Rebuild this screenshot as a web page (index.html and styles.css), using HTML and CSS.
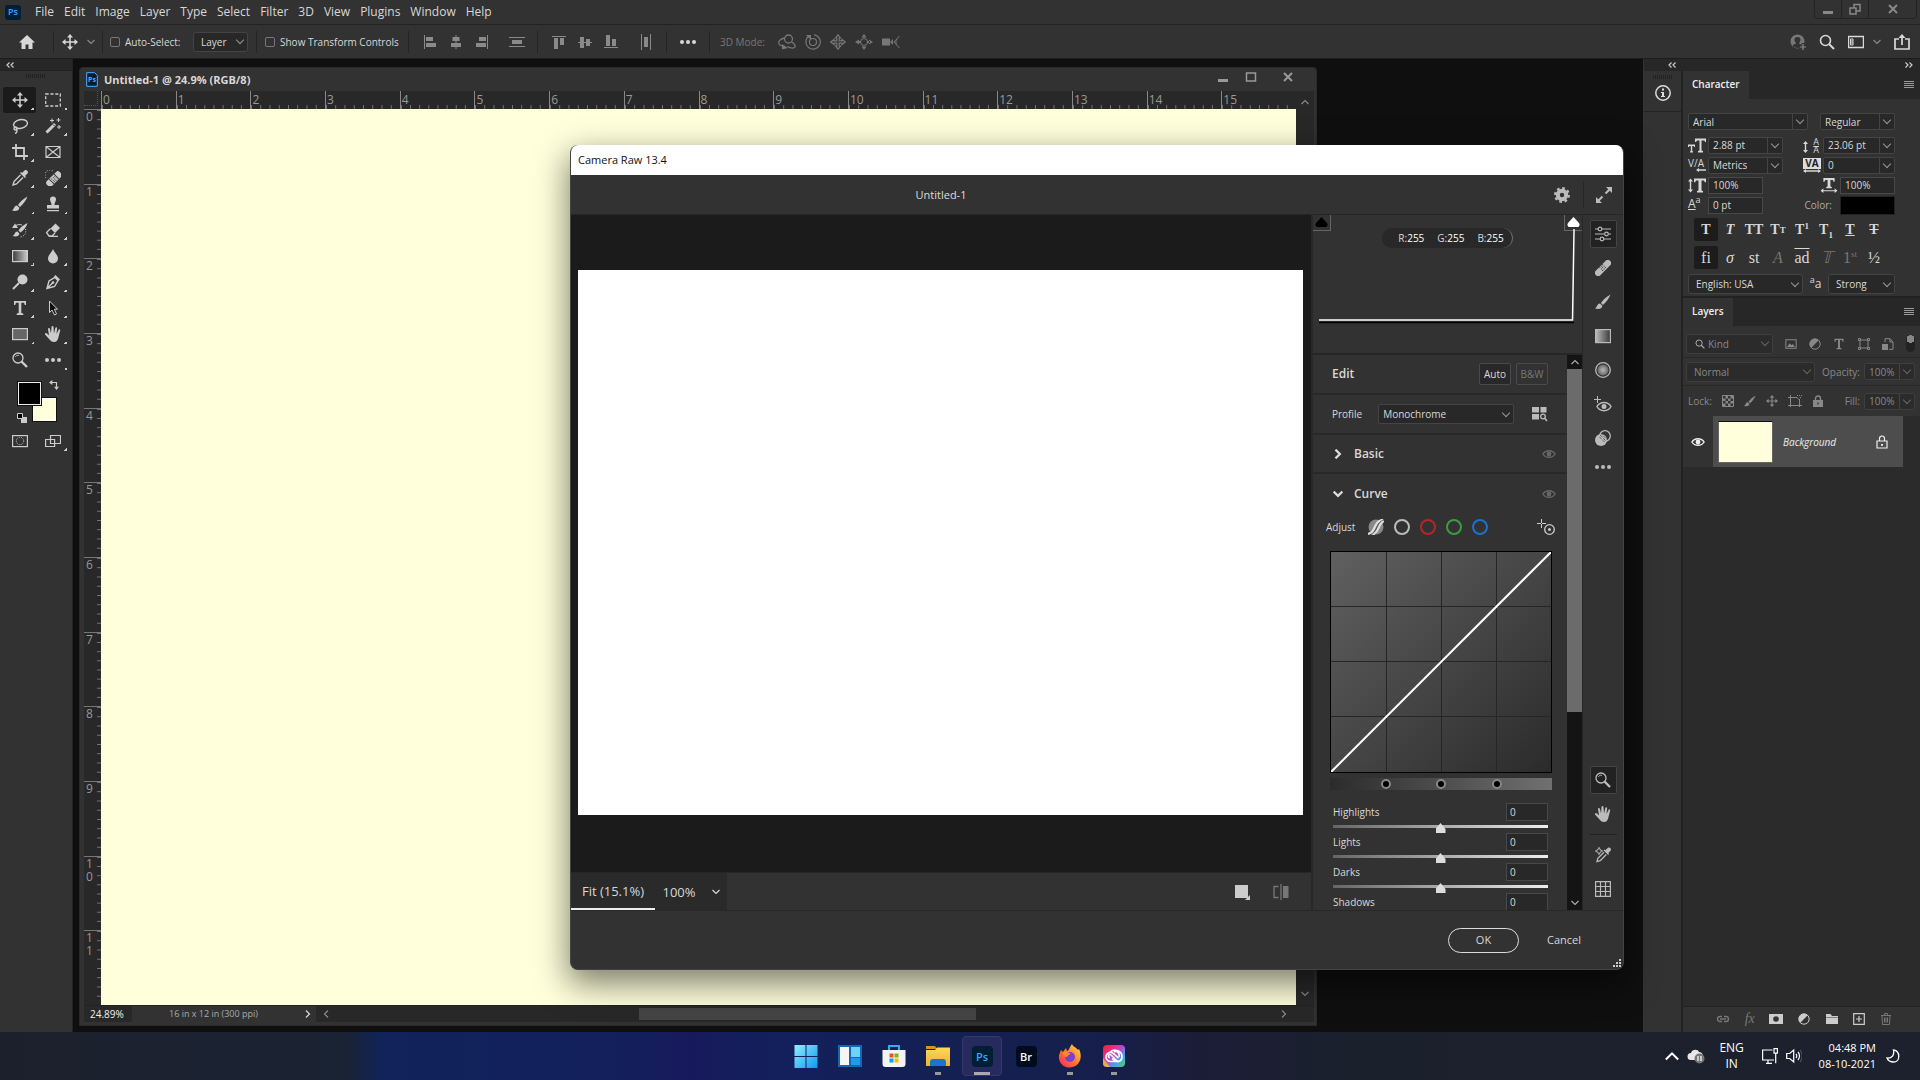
FILE: index.html
```html
<!DOCTYPE html>
<html lang="en">
<head>
<meta charset="utf-8">
<title>Untitled-1 @ 24.9% (RGB/8)</title>
<link rel="stylesheet" href="styles.css">
</head>
<body>
<svg class="defs" aria-hidden="true">
  <defs>
    <linearGradient id="gr"><stop offset="0" stop-color="#3a3a3a"/><stop offset="1" stop-color="#ccc"/></linearGradient>
    <linearGradient id="grl"><stop offset="0" stop-color="#bbb"/><stop offset="1" stop-color="#3a3a3a"/></linearGradient>
    <radialGradient id="rad"><stop offset="0.2" stop-color="#aaa"/><stop offset="1" stop-color="#666"/></radialGradient>
    <linearGradient id="win" x1="0" y1="0" x2="1" y2="1"><stop offset="0" stop-color="#8ef0ff"/><stop offset="1" stop-color="#0f97ee"/></linearGradient>
    <linearGradient id="fold" x1="0" y1="0" x2="0" y2="1"><stop offset="0" stop-color="#ffd75e"/><stop offset="1" stop-color="#efb22d"/></linearGradient>
    <linearGradient id="fire" x1="1" y1="0" x2="0" y2="1"><stop offset="0" stop-color="#ffe14a"/><stop offset="0.5" stop-color="#ff7a2e"/><stop offset="1" stop-color="#f5206a"/></linearGradient>
    <linearGradient id="cc" x1="0" y1="0" x2="1" y2="1"><stop offset="0" stop-color="#e8262b"/><stop offset="0.3" stop-color="#ee2a86"/><stop offset="0.5" stop-color="#b34fd0"/><stop offset="0.75" stop-color="#3fa9f0"/><stop offset="1" stop-color="#5fd04a"/></linearGradient>
  </defs>
  <symbol id="home" viewBox="0 0 16 16"><path fill="currentColor" d="M8 1 0 8.500h2.500V15h4v-4.500h3V15h4V8.500H16z"/></symbol>
  <symbol id="move" viewBox="0 0 16 16"><path fill="none" stroke="currentColor" stroke-width="1.500" d="M8 2v12M2 8h12"/><path fill="currentColor" d="M8 0l3 3.500H5zM8 16l3-3.500H5zM0 8l3.500-3v6zM16 8l-3.500-3v6z"/></symbol>
  <symbol id="chev" viewBox="0 0 8 8"><path fill="none" stroke="currentColor" stroke-width="1.200" d="M.5 2 4 5.500 7.500 2"/></symbol>
  <symbol id="chevb" viewBox="0 0 8 8"><path fill="none" stroke="currentColor" stroke-width="1.800" d="M.5 2 4 5.500 7.500 2"/></symbol>
  <symbol id="al1" viewBox="0 0 16 16"><path fill="currentColor" d="M2 1h1v14H2zM4 3h7v4H4zM4 9h10v4H4z"/></symbol>
  <symbol id="al2" viewBox="0 0 16 16"><path fill="currentColor" d="M7.500 1h1v14h-1zM4.500 3h7v4h-7zM3 9h10v4H3z"/></symbol>
  <symbol id="al3" viewBox="0 0 16 16"><path fill="currentColor" d="M13 1h1v14h-1zM5 3h7v4H5zM2 9h10v4H2z"/></symbol>
  <symbol id="al4" viewBox="0 0 16 16"><path fill="currentColor" d="M0 3h16v1H0zM0 12h16v1H0zM3 6h10v4H3z"/></symbol>
  <symbol id="al5" viewBox="0 0 16 16"><path fill="currentColor" d="M1 2h14v1H1zM3 4h4v11H3zM9 4h4v7H9z"/></symbol>
  <symbol id="al6" viewBox="0 0 16 16"><path fill="currentColor" d="M1 8h14v1H1zM3 3h4v11H3zM9 5h4v7H9z"/></symbol>
  <symbol id="al7" viewBox="0 0 16 16"><path fill="currentColor" d="M1 13h14v1H1zM3 1h4v11H3zM9 5h4v7H9z"/></symbol>
  <symbol id="al8" viewBox="0 0 16 16"><path fill="currentColor" d="M3 0h1v16H3zM12 0h1v16h-1zM6 3h4v10H6z"/></symbol>
  <symbol id="dots" viewBox="0 0 16 16"><g fill="currentColor"><circle cx="2" cy="8" r="2"/><circle cx="8" cy="8" r="2"/><circle cx="14" cy="8" r="2"/></g></symbol>
  <symbol id="m1" viewBox="0 0 18 16"><g fill="none" stroke="currentColor" stroke-width="1.300"><circle cx="10.500" cy="5" r="4"/><path d="M6.500 4C2 5 0 7.500 1 10c.5 1 2 2 4 2M13.500 8c3 1.500 4.500 4 3 5.500-1.500 1-5 .5-7-1"/></g><path fill="currentColor" d="M4 10l6 4-6 1.500z"/></symbol>
  <symbol id="m2" viewBox="0 0 16 16"><g fill="none" stroke="currentColor" stroke-width="1.200"><circle cx="8" cy="8" r="3.500"/><path d="M4 2a7.200 7.200 0 1 0 5-1.200"/></g><path fill="currentColor" d="M1 1h5v5z"/></symbol>
  <symbol id="m3" viewBox="0 0 16 16"><path fill="none" stroke="currentColor" stroke-width="1.200" d="M8 .8 10.500 4H9.200v2.800H12V5.500L15.200 8 12 10.500V9.200H9.200V12h1.300L8 15.200 5.500 12h1.300V9.200H4v1.300L.8 8 4 5.500v1.300h2.800V4H5.500z"/></symbol>
  <symbol id="m4" viewBox="0 0 18 16"><circle cx="9" cy="8" r="3.500" fill="none" stroke="currentColor"/><path fill="currentColor" d="M9 0l2.500 3.500H6.500zM9 16l2.500-3.500H6.500zM0 8l4-2.500v5zM18 8l-4-2.500v5zM3 7h3v2H3zM12 7h3v2h-3z"/></symbol>
  <symbol id="m5" viewBox="0 0 18 16"><path fill="currentColor" d="M0 4.500h8v7H0zM8 8l3-3v6z"/><path fill="none" stroke="currentColor" d="M17.500 2 12 8l5.500 6M15 5c-1.500 2-1.500 4 0 6"/></symbol>
  <symbol id="marq" viewBox="0 0 16 16"><rect x=".7" y="2" width="14.600" height="12" fill="none" stroke="currentColor" stroke-width="1.300" stroke-dasharray="3 1.800"/></symbol>
  <symbol id="lasso" viewBox="0 0 16 16"><g fill="none" stroke="currentColor" stroke-width="1.400"><ellipse cx="8.500" cy="6" rx="7" ry="4.300" transform="rotate(-12 8.500 6)"/><circle cx="3.500" cy="10.500" r="1.500"/><path d="M4.500 11.500c1 1.500.5 3-1.500 4"/></g></symbol>
  <symbol id="wand" viewBox="0 0 16 16"><path stroke="currentColor" stroke-width="3" d="M1.500 14.500 10 6"/><path stroke="#333" d="M8 6.500 9.500 8"/><path stroke="currentColor" d="M7 .5v4M5 2.500h4M13.500 0v4M11.500 2h4M14 7v4M12 9h4"/></symbol>
  <symbol id="crop" viewBox="0 0 16 16"><path fill="none" stroke="currentColor" stroke-width="1.800" d="M4 0v12h12M0 4h12v12"/></symbol>
  <symbol id="frame" viewBox="0 0 16 16"><path fill="none" stroke="currentColor" stroke-width="1.200" d="M1 2.500h14v11H1zM1 2.500l14 11M15 2.500l-14 11"/></symbol>
  <symbol id="drop" viewBox="0 0 16 16"><path fill="none" stroke="currentColor" stroke-width="1.400" d="M8.500 5 2 11.500 1 15l3.500-1L11 7.500"/><path fill="currentColor" d="M8 3l5 5 1-1-1-1 2.500-2.500C17 1.500 14.500-1 12.500.5L10 3 9 2z"/></symbol>
  <symbol id="heal" viewBox="0 0 16 16"><g transform="rotate(-45 9 9)"><rect x="0" y="5.500" width="18" height="7" rx="2.500" fill="currentColor"/><path stroke="#333" d="M5.500 5.500v7M12.500 5.500v7"/><path stroke="#333" stroke-dasharray="1 1" d="M7 7.500h4.500M7 9.500h4.500M7 11.300h4.500"/></g><path fill="none" stroke="currentColor" stroke-dasharray="1 1.500" d="M1 8a5 5 0 0 1 7-7"/></symbol>
  <symbol id="brush" viewBox="0 0 16 16"><path fill="currentColor" d="M15.500.5C11 3 8 6 6 9l2 2c3-3 6-6 7.500-10.500zM5 9.500c-3 0-2.500 3.500-5 5 3 1 7.500.5 7.300-2.800z"/></symbol>
  <symbol id="stamp" viewBox="0 0 16 16"><path fill="currentColor" d="M5 3.500a3 3 0 1 1 6 0C11 5.500 9.500 6 9.500 9H14v3.500H2V9h4.500C6.500 6 5 5.500 5 3.500zM2 14h12v1.300H2z"/></symbol>
  <symbol id="hist" viewBox="0 0 16 16"><path fill="currentColor" d="M15.500 1C11 3 8 6 6.500 8.500l2 2C12 8 14.500 5 15.500 1zM5.500 9.500c-3 0-2.500 3.500-5 4.500 3 1 7 .5 6.800-2.500zM0 6h6L3 1.500z"/><path fill="none" stroke="currentColor" d="M3 4c3-2 5-1.500 7-1"/><path fill="none" stroke="currentColor" stroke-dasharray="1 1.400" d="M13.500 7c1 3 0 7-5 8"/></symbol>
  <symbol id="erase" viewBox="0 0 16 16"><path fill="currentColor" d="M10.500 1.500 15 6l-5 5-4.500-4.500z"/><path fill="none" stroke="currentColor" stroke-width="1.300" d="M5.500 6.500 1.500 10.500 4 14h3l3-3M4 14.300h9"/></symbol>
  <symbol id="grad" viewBox="0 0 16 16"><rect x=".6" y="2.600" width="14.800" height="11" fill="url(#gr)" stroke="currentColor" stroke-width="1.200"/></symbol>
  <symbol id="gradl" viewBox="0 0 16 16"><rect x=".6" y="1.600" width="14.800" height="13" fill="url(#grl)" stroke="currentColor" stroke-width="1.200"/></symbol>
  <symbol id="blur" viewBox="0 0 16 16"><path fill="currentColor" d="M8 1c1 3 5 6 5 9.500a5 5 0 0 1-10 0C3 7 7 4 8 1z"/></symbol>
  <symbol id="dodge" viewBox="0 0 16 16"><circle cx="10.500" cy="5.500" r="5" fill="currentColor"/><path stroke="currentColor" stroke-width="2" d="M7 9 1 15"/></symbol>
  <symbol id="pen" viewBox="0 0 16 16"><path fill="none" stroke="currentColor" stroke-width="1.400" d="M2 14.500 4 7l6-3.500 3 3L9.500 12.500zM2 14.500 8 8.500"/><path fill="currentColor" d="M10.500 1 15 5.500 13.500 7 9 2.500z"/><circle cx="8" cy="8.500" r="1.300" fill="currentColor"/></symbol>
  <symbol id="type" viewBox="0 0 16 16"><path fill="currentColor" d="M2 1h12v4h-1.200L12 2.800H9.300V13l2 .6V15H4.700v-1.400l2-.6V2.800H4L3.200 5H2z"/></symbol>
  <symbol id="arrow" viewBox="0 0 16 16"><path fill="#0d0d0d" stroke="currentColor" d="M4.500 1v11.500L7 10l2.500 5 2-1L9.300 9.200h3.200z"/></symbol>
  <symbol id="rect" viewBox="0 0 16 16"><rect x=".6" y="2.600" width="14.800" height="11" fill="#666" stroke="currentColor" stroke-width="1.200"/></symbol>
  <symbol id="hand" viewBox="0 0 16 16"><path fill="currentColor" d="M5 14 0 8.500c-.5-1.500 1-2 2-1l2 2L3 3c0-1.500 1.700-1.500 2 0l1 4.500L6.500 1c.2-1.300 1.900-1.300 2 0L9 7.500 10.300 2c.4-1.300 2-1 1.800.4L11.500 8l2-4c.6-1.200 2-.7 1.700.6L13.500 11c-.5 3-2 5-4.500 5-2 0-3-.7-4-2z"/></symbol>
  <symbol id="zoom" viewBox="0 0 16 16"><circle cx="6" cy="6" r="5" fill="none" stroke="currentColor" stroke-width="1.300"/><path stroke="currentColor" stroke-width="2.400" d="M9.500 9.500 15 15"/><path fill="none" stroke="currentColor" stroke-width=".8" d="M3.300 5A3 3 0 0 1 7 3.300"/></symbol>
  <symbol id="swap" viewBox="0 0 12 12"><path fill="none" stroke="currentColor" stroke-width="1.400" d="M3 3h6v6"/><path fill="currentColor" d="M0 3l4-3v6zM9 12 6 8h6z"/></symbol>
  <symbol id="def" viewBox="0 0 10 10"><path fill="#ccc" d="M4 4h6v6H4z"/><path fill="#000" stroke="#ccc" d="M.5.500h5v5h-5z"/></symbol>
  <symbol id="mask" viewBox="0 0 16 16"><rect x=".6" y="2.600" width="14.800" height="11" fill="none" stroke="currentColor" stroke-width="1.200"/><circle cx="8" cy="8" r="3.700" fill="none" stroke="currentColor" stroke-dasharray="1 1"/></symbol>
  <symbol id="screen" viewBox="0 0 16 16"><path fill="#333" stroke="currentColor" stroke-width="1.200" d="M.6 6.500h9v7h-9zM5.500 2.500h10v8h-10z"/></symbol>
  <symbol id="info" viewBox="0 0 16 16"><circle cx="8" cy="8" r="7.200" fill="none" stroke="currentColor" stroke-width="1.500"/><path fill="currentColor" d="M7 3.500h2v2H7zM6 7h3v4h1v1H6v-1h1V8H6z"/></symbol>
  <symbol id="user" viewBox="0 0 16 16"><circle cx="7.500" cy="7.500" r="7" fill="#777"/><path fill="#333" d="M7.500 3c4.500 0 3 5 1.500 6 0 1.500 3 1 3.500 3-2 2.500-8 2.500-10 0 .5-2 3.500-1.500 3.500-3-1.500-1-3-6 1.500-6z"/><path stroke="#333" stroke-width="3" d="M13 9v7M9.500 13H16"/><path stroke="#888" stroke-width="1.200" d="M13 10v6M10 13h6"/></symbol>
  <symbol id="srch" viewBox="0 0 16 16"><circle cx="6.500" cy="6.500" r="5" fill="none" stroke="currentColor" stroke-width="1.600"/><path stroke="currentColor" stroke-width="2" d="M10 10l5 5"/></symbol>
  <symbol id="wksp" viewBox="0 0 16 16"><path fill="none" stroke="currentColor" stroke-width="1.300" d="M.6 2.500h14.800v11H.6z"/><path fill="none" stroke="currentColor" d="M2.500 5h2.500v6H2.500zM2.500 7h2.500M2.500 9h2.500"/></symbol>
  <symbol id="share" viewBox="0 0 16 16"><path fill="none" stroke="currentColor" stroke-width="1.700" d="M5 5H1v10h14V5h-4M8 11V2"/><path fill="currentColor" d="M8 0l3.500 4h-7z"/></symbol>
  <symbol id="wmin" viewBox="0 0 12 12"><path fill="currentColor" d="M1 8h10v3H1z"/></symbol>
  <symbol id="wres" viewBox="0 0 12 12"><path fill="none" stroke="currentColor" stroke-width="1.500" d="M1 5h6v6H1zM5 5V1.500h6V8H7"/></symbol>
  <symbol id="wmax" viewBox="0 0 12 12"><path fill="none" stroke="currentColor" stroke-width="1.500" d="M1.500 2h9v8h-9z"/></symbol>
  <symbol id="wx" viewBox="0 0 12 12"><path fill="none" stroke="currentColor" stroke-width="2" d="M2 2l8 8M10 2 2 10"/></symbol>
  <symbol id="doc" viewBox="0 0 12 15"><path fill="#001e36" stroke="#4ab1ff" d="M.7.700h8L11.300 3.500v10.800H.7z"/></symbol>
  <symbol id="dbl" viewBox="0 0 8 6"><path fill="none" stroke="currentColor" stroke-width="1.200" d="M3.500.500 1 3l2.500 2.500M7.500.500 5 3l2.500 2.500"/></symbol>
  <symbol id="gear" viewBox="0 0 16 16"><circle cx="8" cy="8" r="4.200" fill="none" stroke="currentColor" stroke-width="4"/><circle cx="8" cy="8" r="6.800" fill="none" stroke="currentColor" stroke-width="2.400" stroke-dasharray="2.670 2.670"/></symbol>
  <symbol id="expand" viewBox="0 0 16 16"><path stroke="currentColor" stroke-width="2" d="M14 2 9.500 6.500M2 14l4.500-4.500"/><path fill="currentColor" d="M10 0h6v6zM0 10v6h6z"/></symbol>
  <symbol id="slid" viewBox="0 0 16 16"><g fill="none" stroke="currentColor" stroke-width="1.200"><path d="M0 3h3M7 3h9M0 8h9.500M13.500 8H16M0 13h5M9 13h7"/><circle cx="5" cy="3" r="1.800"/><circle cx="11.500" cy="8" r="1.800"/><circle cx="7" cy="13" r="1.800"/></g></symbol>
  <symbol id="spot" viewBox="0 0 16 16"><g transform="rotate(-45 8 8)"><rect x="-2" y="4.800" width="20" height="6.400" rx="3" fill="currentColor"/><path stroke="#333" stroke-dasharray="1 1" d="M6 5v6M8 5v6M10 5v6"/></g></symbol>
  <symbol id="radial" viewBox="0 0 16 16"><circle cx="8" cy="8" r="7.300" fill="none" stroke="currentColor" stroke-width="1.300"/><circle cx="8" cy="8" r="5.500" fill="url(#rad)"/></symbol>
  <symbol id="redeye" viewBox="0 0 18 16"><path stroke="currentColor" d="M3.500 0v7M0 3.500h7"/><path fill="none" stroke="currentColor" stroke-width="1.500" d="M3 10.500c3-5.500 11-5.500 14 0-3 5.500-11 5.500-14 0z"/><circle cx="10" cy="10.500" r="2.500" fill="currentColor"/></symbol>
  <symbol id="preset" viewBox="0 0 16 16"><circle cx="6" cy="10" r="6" fill="currentColor"/><circle cx="10" cy="6" r="5.300" fill="none" stroke="currentColor" stroke-width="1.300"/><path stroke="#333" stroke-dasharray="1 1" d="M5 5l6 6M7 4.500l5 5M4.500 7l5 5"/></symbol>
  <symbol id="wb" viewBox="0 0 16 16"><use href="#drop" x="1" y="0" width="15" height="16"/><circle cx="4" cy="4" r="2.200" fill="none" stroke="currentColor"/><path stroke="currentColor" d="M4 0v2M4 6v2M0 4h2M6 4h2"/></symbol>
  <symbol id="grid" viewBox="0 0 16 16"><path fill="none" stroke="currentColor" stroke-width="1.200" d="M.6.600h14.800v14.800H.6zM.6 5.500h14.800M.6 10.500h14.800M5.500.600v14.800M10.500.600v14.800"/></symbol>
  <symbol id="eye" viewBox="0 0 16 16"><path fill="none" stroke="currentColor" stroke-width="1.600" d="M1 8c3-5 11-5 14 0-3 5-11 5-14 0z"/><circle cx="8" cy="8" r="2.800" fill="currentColor"/></symbol>
  <symbol id="browse" viewBox="0 0 16 16"><path fill="currentColor" d="M0 1h7v5.500H0zM8.500 1h6v5.500h-6zM0 8h7v5.500H0z"/><circle cx="11" cy="10.500" r="2.300" fill="none" stroke="currentColor" stroke-width="1.300"/><path stroke="currentColor" stroke-width="1.500" d="M12.500 12l2.500 3"/></symbol>
  <symbol id="param" viewBox="0 0 16 16"><circle cx="8" cy="8" r="7.500" fill="#888"/><path fill="none" stroke="#ddd" stroke-width="2.200" d="M0 15c4-1 5-3 7-7.500S11 1 15 .8M3.500 16c4-1 5.500-3 7-7s2-5 5.500-7.500"/><path fill="none" stroke="#444" stroke-width=".8" d="M2 16c4-1.500 5-3.500 7-8s3.500-6 7-7"/></symbol>
  <symbol id="ring" viewBox="0 0 16 16"><circle cx="8" cy="8" r="7" fill="none" stroke="currentColor" stroke-width="2"/></symbol>
  <symbol id="target" viewBox="0 0 18 16"><path stroke="currentColor" stroke-dasharray="4 1" d="M4.500 0v9M0 4.500h9"/><circle cx="12.500" cy="10.500" r="4.800" fill="none" stroke="currentColor" stroke-width="1.300"/><circle cx="12.500" cy="10.500" r="1.500" fill="currentColor"/></symbol>
  <symbol id="clip" viewBox="0 0 14 12"><path fill="currentColor" d="M7 0l6 6.500c1.500 2.500 0 4.500-2 4.500H3C1 11-.5 9 1 6.500z"/></symbol>
  <symbol id="sq" viewBox="0 0 16 16"><path fill="#ccc" d="M1 1h13v13H1z"/><path fill="#ccc" d="M16 11v5h-5z"/></symbol>
  <symbol id="ba" viewBox="0 0 16 16"><path fill="none" stroke="currentColor" stroke-width="1.300" d="M8 0v16M5.500 2.500H1v11h4.500"/><path fill="currentColor" d="M10 2h5.500v12H10z"/></symbol>
  <symbol id="pic" viewBox="0 0 14 12"><path fill="none" stroke="currentColor" stroke-width="1.200" d="M1 1h12v10H1z"/><path fill="currentColor" d="M2.500 9.500 5.500 5l2 2.500L9 6l2.500 3.500z"/></symbol>
  <symbol id="adj" viewBox="0 0 12 12"><circle cx="6" cy="6" r="5.200" fill="none" stroke="currentColor"/><path fill="currentColor" d="M9.700 2.300A5.200 5.200 0 0 0 2.300 9.700z"/></symbol>
  <symbol id="shape" viewBox="0 0 12 12"><path fill="none" stroke="currentColor" d="M2 2h8v8H2z"/><path fill="#333" stroke="currentColor" d="M.5.500h2v2h-2zM9.500.500h2v2h-2zM.5 9.500h2v2h-2zM9.500 9.500h2v2h-2z"/></symbol>
  <symbol id="smart" viewBox="0 0 12 12"><path fill="none" stroke="currentColor" d="M3 4V.700h5L11 4v7.300H7M8 .700V4h3"/><path fill="currentColor" d="M0 6h6v6H0z"/></symbol>
  <symbol id="checker" viewBox="0 0 12 12"><path fill="none" stroke="currentColor" d="M.5.500h11v11H.5z"/><path fill="currentColor" d="M3.500 1h2.500v2.500H3.500zM8.500 1H11v2.500H8.500zM1 3.500h2.500V6H1zM6 3.500h2.500V6H6zM3.500 6H6v2.500H3.500zM8.500 6H11v2.500H8.500zM1 8.500h2.500V11H1zM6 8.500h2.500V11H6z"/></symbol>
  <symbol id="artb" viewBox="0 0 14 12"><path fill="none" stroke="currentColor" d="M2.500 0v12M0 2.500h9M0 10.500h14M11.500 4v8M9 2.500l2.500 2.500"/><path stroke="currentColor" stroke-dasharray="1 1" d="M9 .500h5M12 2.500h2"/></symbol>
  <symbol id="lock" viewBox="0 0 12 12"><path fill="none" stroke="currentColor" stroke-width="1.400" d="M3.500 5V3.500a2.500 2.500 0 0 1 5 0V5"/><path fill="currentColor" d="M1 5h10v7H1z"/><path fill="#333" d="M5.300 7.500h1.400v2H5.300z"/></symbol>
  <symbol id="locko" viewBox="0 0 12 14"><path fill="none" stroke="currentColor" stroke-width="1.200" d="M3.500 6V3.500a2.500 2.500 0 0 1 5 0V6M1 6h10v7H1z"/><path fill="currentColor" d="M5 9h2v1.800H5z"/></symbol>
  <symbol id="link" viewBox="0 0 14 12"><path fill="none" stroke="currentColor" stroke-width="1.400" d="M6 8.500H4a2.500 2.500 0 0 1 0-5h2M8 8.500h2a2.500 2.500 0 0 0 0-5H8M4 6h6"/></symbol>
  <symbol id="lmask" viewBox="0 0 14 12"><path fill="currentColor" d="M0 1h14v10H0z"/><circle cx="7" cy="6" r="2.800" fill="#333"/></symbol>
  <symbol id="folder" viewBox="0 0 14 12"><path fill="currentColor" d="M1 1h4.500L7 3h6v1H1zM1 4.500h12V11H1z"/></symbol>
  <symbol id="plus" viewBox="0 0 12 12"><path fill="none" stroke="currentColor" stroke-width="1.200" d="M.7.700h10.600v10.600H.7zM6 3v6M3 6h6"/></symbol>
  <symbol id="trash" viewBox="0 0 12 12"><path fill="none" stroke="currentColor" d="M1 2.500h10M4.500 2.500v-2h3v2M2 2.500l.5 9h7l.5-9M4.500 4.500v5M6 4.500v5M7.500 4.500v5"/></symbol>
  <symbol id="size" viewBox="0 0 18 14"><path fill="currentColor" d="M7 0h11v3.500h-1L16.500 2h-3v10l1.500.5V14h-5v-1.500l1.500-.5V2H9L8 3.500H7zM0 6h7v2.500H6L5.700 7.500H4.200v5L5 13v1H2v-1l.8-.5v-5H1.300L1 8.500H0z"/></symbol>
  <symbol id="vs" viewBox="0 0 18 14"><path fill="currentColor" d="M6 0h12v3.800h-1.200L16 2h-2.500v10l1.500.5V14H9v-1.500l1.500-.5V2H8L7.200 3.800H6zM2.500 0 5 3H3.200v8H5l-2.500 3L0 11h1.800V3H0z"/></symbol>
  <symbol id="hs" viewBox="0 0 18 16"><path fill="currentColor" d="M3 0h12v4h-1.200L13 2h-2.500v7l1.500.5V11H6V9.500L7.500 9V2H5L4.200 4H3zM0 13.500 3 11v2h12v-2l3 2.500-3 2.500v-2H3v2z"/></symbol>
  <symbol id="harr" viewBox="0 0 18 4"><path fill="currentColor" d="M0 2l3-2v1.300h12V0l3 2-3 2V2.700H3V4z"/></symbol>
  <symbol id="larr" viewBox="0 0 10 4"><path fill="currentColor" d="M0 2l3-2v1.300h7v1.400H3V4z"/></symbol>
  <symbol id="varr" viewBox="0 0 5 12"><path fill="currentColor" d="M2.500 0 5 3H3.200v6H5l-2.500 3L0 9h1.800V3H0z"/></symbol>
  <symbol id="cloud" viewBox="0 0 18 16"><path fill="#e8e8e8" d="M4 12a3.500 3.500 0 0 1 0-7C5 1 11 1 12 4c4 0 5 5 3 8z"/><circle cx="12.500" cy="10.500" r="5" fill="#777"/><path stroke="#fff" stroke-width="1.200" d="M11 8v5M14 8v5"/></symbol>
  <symbol id="mon" viewBox="0 0 16 16"><path fill="none" stroke="currentColor" stroke-width="1.200" d="M10.500 2H.600v10H12M4 15.300h6M6 12v3M12 .700h3.400v4.500H12zM13.700 5.200v10"/></symbol>
  <symbol id="spk" viewBox="0 0 16 16"><path fill="none" stroke="currentColor" stroke-width="1.200" d="M.7 5.500h3l4-3.500v12l-4-3.500h-3zM10 6c1 1 1 3 0 4M12 4c2 2 2 6 0 8"/><path fill="none" stroke="#666" d="M14 2c3 3 3 9 0 12"/></symbol>
  <symbol id="moon" viewBox="0 0 14 14"><path fill="none" stroke="currentColor" stroke-width="1.300" d="M7.500 1c7 1 7 12 0 12-3 0-5.500-1.500-6.500-4 5 .5 7.500-3 6.500-8z"/></symbol>
</svg>

<header>
  <nav class="menubar" aria-label="Main menu">
    <span class="pslogo">Ps</span>
    <button>File</button><button>Edit</button><button>Image</button><button>Layer</button><button>Type</button><button>Select</button><button>Filter</button><button>3D</button><button>View</button><button>Plugins</button><button>Window</button><button>Help</button>
    <div class="winbtns"><button aria-label="Minimize"><svg class="i12"><use href="#wmin"/></svg></button><button aria-label="Restore"><svg class="i12"><use href="#wres"/></svg></button><button class="wclose" aria-label="Close"><svg class="i12"><use href="#wx"/></svg></button></div>
  </nav>
  <div class="options">
    <div class="grp g-home"><button aria-label="Home"><svg class="i16"><use href="#home"/></svg></button></div>
    <div class="grp g-move"><svg class="i16"><use href="#move"/></svg><svg class="i8 dim"><use href="#chev"/></svg></div>
    <div class="grp g-auto"><label><input type="checkbox">Auto-Select:</label><span class="sel rnd"><select aria-label="Auto-select target"><option>Layer</option></select></span></div>
    <div class="grp g-show"><label><input type="checkbox">Show Transform Controls</label></div>
    <div class="grp g-al dim"><svg class="i16"><use href="#al1"/></svg><svg class="i16"><use href="#al2"/></svg><svg class="i16"><use href="#al3"/></svg><svg class="i16"><use href="#al4"/></svg></div>
    <div class="grp g-al dim"><svg class="i16"><use href="#al5"/></svg><svg class="i16"><use href="#al6"/></svg><svg class="i16"><use href="#al7"/></svg><svg class="i16"><use href="#al8"/></svg></div>
    <div class="grp g-dots"><button aria-label="More"><svg class="i16"><use href="#dots"/></svg></button></div>
    <div class="g-3d dim"><span>3D Mode:</span><svg class="i18"><use href="#m1"/></svg><svg class="i16"><use href="#m2"/></svg><svg class="i16"><use href="#m3"/></svg><svg class="i18"><use href="#m4"/></svg><svg class="i18"><use href="#m5"/></svg></div>
    <div class="g-right"><button aria-label="Account"><svg class="i16"><use href="#user"/></svg></button><button aria-label="Search"><svg class="i16"><use href="#srch"/></svg></button><button class="wk" aria-label="Workspace"><svg class="i16"><use href="#wksp"/></svg><svg class="i8 dim"><use href="#chev"/></svg></button><button aria-label="Share"><svg class="i16"><use href="#share"/></svg></button></div>
  </div>
</header>

<main class="workspace">
  <aside class="tools">
    <div class="collapse"><svg class="idbl"><use href="#dbl"/></svg></div>
    <div class="grip"></div>
    <div class="toolgrid">
      <button class="on fly" aria-label="Move"><svg class="i16"><use href="#move"/></svg></button><button class="fly" aria-label="Marquee"><svg class="i16"><use href="#marq"/></svg></button>
      <button class="fly" aria-label="Lasso"><svg class="i16"><use href="#lasso"/></svg></button><button class="fly" aria-label="Magic wand"><svg class="i16"><use href="#wand"/></svg></button>
      <button class="fly" aria-label="Crop"><svg class="i16"><use href="#crop"/></svg></button><button aria-label="Frame"><svg class="i16"><use href="#frame"/></svg></button>
      <button class="fly" aria-label="Eyedropper"><svg class="i16"><use href="#drop"/></svg></button><button class="fly" aria-label="Healing brush"><svg class="i16"><use href="#heal"/></svg></button>
      <button class="fly" aria-label="Brush"><svg class="i16"><use href="#brush"/></svg></button><button class="fly" aria-label="Clone stamp"><svg class="i16"><use href="#stamp"/></svg></button>
      <button class="fly" aria-label="History brush"><svg class="i16"><use href="#hist"/></svg></button><button class="fly" aria-label="Eraser"><svg class="i16"><use href="#erase"/></svg></button>
      <button class="fly" aria-label="Gradient"><svg class="i16"><use href="#grad"/></svg></button><button class="fly" aria-label="Blur"><svg class="i16"><use href="#blur"/></svg></button>
      <button class="fly" aria-label="Dodge"><svg class="i16"><use href="#dodge"/></svg></button><button class="fly" aria-label="Pen"><svg class="i16"><use href="#pen"/></svg></button>
      <button class="fly" aria-label="Type"><svg class="i16"><use href="#type"/></svg></button><button class="fly" aria-label="Path selection"><svg class="i16"><use href="#arrow"/></svg></button>
      <button class="fly" aria-label="Rectangle"><svg class="i16"><use href="#rect"/></svg></button><button class="fly" aria-label="Hand"><svg class="i16"><use href="#hand"/></svg></button>
      <button aria-label="Zoom"><svg class="i16"><use href="#zoom"/></svg></button><button class="fly" aria-label="Edit toolbar"><svg class="i16"><use href="#dots"/></svg></button>
    </div>
    <div class="swatches"><span class="bg"></span><span class="fg"></span><svg class="i10 swap"><use href="#swap"/></svg><svg class="i10 def"><use href="#def"/></svg></div>
    <div class="toolgrid"><button aria-label="Quick mask"><svg class="i16"><use href="#mask"/></svg></button><button class="fly" aria-label="Screen mode"><svg class="i16"><use href="#screen"/></svg></button></div>
  </aside>

  <section class="stage">
    <article class="docwin">
      <div class="doctitle"><span class="docicon"><svg><use href="#doc"/></svg><b>Ps</b></span><h2>Untitled-1 @ 24.9% (RGB/8)</h2><div class="docbtns"><svg class="i12"><use href="#wmin"/></svg><svg class="i12"><use href="#wmax"/></svg><svg class="i12"><use href="#wx"/></svg></div></div>
      <div class="docbody">
        <div class="corner"></div>
        <div class="hruler"><span>0</span><span>1</span><span>2</span><span>3</span><span>4</span><span>5</span><span>6</span><span>7</span><span>8</span><span>9</span><span>10</span><span>11</span><span>12</span><span>13</span><span>14</span><span>15</span></div>
        <div class="vscroll"><svg class="i8 up"><use href="#chev"/></svg><svg class="i8"><use href="#chev"/></svg></div>
        <div class="vruler"><span>0</span><span>1</span><span>2</span><span>3</span><span>4</span><span>5</span><span>6</span><span>7</span><span>8</span><span>9</span><span>1<br>0</span><span>1<br>1</span></div>
        <div class="canvas"></div>
      </div>
      <div class="status"><span class="zoomv">24.89%</span><span class="dims">16 in x 12 in (300 ppi)</span><svg class="i8 rt"><use href="#chev"/></svg><div class="hscroll"><svg class="i8 lf"><use href="#chev"/></svg><div class="htrack"><div class="hthumb"></div></div><svg class="i8 rt"><use href="#chev"/></svg></div></div>
    </article>

    <section class="dialog" role="dialog" aria-label="Camera Raw 13.4">
      <div class="dtitle">Camera Raw 13.4</div>
      <div class="dhead"><h3>Untitled-1</h3><button class="dgear" aria-label="Settings"><svg class="i16"><use href="#gear"/></svg></button><button class="dexp" aria-label="Full screen"><svg class="i16"><use href="#expand"/></svg></button></div>
      <div class="dmain">
        <div class="preview">
          <div class="pview"><div class="photo"></div></div>
          <div class="pfoot"><button class="fit">Fit (15.1%)</button><button class="pct">100%<svg class="i8"><use href="#chev"/></svg></button><div class="pright"><svg class="i16"><use href="#sq"/></svg><svg class="i16 dk"><use href="#ba"/></svg></div></div>
        </div>
        <div class="edit">
          <div class="histo">
            <div class="clips"><span class="cl blk"><svg><use href="#clip"/></svg></span><span class="rgb"><span>R:<b>255</b></span><span>G:<b>255</b></span><span>B:<b>255</b></span></span><span class="cl"><svg><use href="#clip"/></svg></span></div>
            <svg class="hline" viewBox="0 0 270 90" preserveAspectRatio="none"><path stroke="#000" stroke-width="1.500" fill="none" d="M6 90.500h256"/><path stroke="#fff" stroke-width="1.500" fill="none" d="M6 88h254.500l1.500-90"/></svg>
          </div>
          <div class="scrollwrap">
            <div class="rows">
              <div class="row redit"><h4>Edit</h4><button>Auto</button><button class="off">B&amp;W</button></div>
              <div class="row rprof"><label for="prof">Profile</label><span class="sel"><select id="prof"><option>Monochrome</option></select></span><svg class="i16 lt"><use href="#browse"/></svg></div>
              <div class="row rsec"><svg class="i10 rt"><use href="#chevb"/></svg><h4>Basic</h4><svg class="i14 dk"><use href="#eye"/></svg></div>
              <div class="rsec"><svg class="i10"><use href="#chevb"/></svg><h4>Curve</h4><svg class="i14 dk"><use href="#eye"/></svg></div>
              <div class="adjust"><span>Adjust</span><svg class="i16"><use href="#param"/></svg><svg class="i16 c-w"><use href="#ring"/></svg><svg class="i16 c-r"><use href="#ring"/></svg><svg class="i16 c-g"><use href="#ring"/></svg><svg class="i16 c-b"><use href="#ring"/></svg><svg class="i18 tg"><use href="#target"/></svg></div>
              <div class="curve"><svg viewBox="0 0 220 220" preserveAspectRatio="none"><path stroke="#262626" d="M55.500 0v220M110.500 0v220M165.500 0v220M0 54.500h220M0 109.500h220M0 164.500h220"/><path stroke="#fff" stroke-width="2" d="M0 220 220 0"/></svg></div>
              <div class="splits"><i></i><i></i><i></i></div>
              <div class="slider"><label for="s1">Highlights</label><input class="num" value="0" aria-label="Highlights value"><input type="range" id="s1"></div>
              <div class="slider"><label for="s2">Lights</label><input class="num" value="0" aria-label="Lights value"><input type="range" id="s2"></div>
              <div class="slider"><label for="s3">Darks</label><input class="num" value="0" aria-label="Darks value"><input type="range" id="s3"></div>
              <div class="slider"><label for="s4">Shadows</label><input class="num" value="0" aria-label="Shadows value"><input type="range" id="s4"></div>
            </div>
            <div class="sbar"><svg class="i8 up"><use href="#chev"/></svg><div class="strack"><div class="sthumb"></div></div><svg class="i8"><use href="#chev"/></svg></div>
          </div>
        </div>
        <div class="strip">
          <button class="on" aria-label="Edit"><svg class="i16"><use href="#slid"/></svg></button><button aria-label="Spot removal"><svg class="i16"><use href="#spot"/></svg></button><button aria-label="Adjustment brush"><svg class="i16"><use href="#brush"/></svg></button><button aria-label="Graduated filter"><svg class="i16"><use href="#gradl"/></svg></button><button aria-label="Radial filter"><svg class="i16"><use href="#radial"/></svg></button><button aria-label="Red eye"><svg class="i18"><use href="#redeye"/></svg></button><button aria-label="Presets"><svg class="i16"><use href="#preset"/></svg></button><button class="short" aria-label="More"><svg class="i16"><use href="#dots"/></svg></button>
          <div class="stripend"><button class="on" aria-label="Zoom"><svg class="i16"><use href="#zoom"/></svg></button><button aria-label="Hand"><svg class="i16"><use href="#hand"/></svg></button><hr><button aria-label="Sampler"><svg class="i16"><use href="#wb"/></svg></button><button aria-label="Grid"><svg class="i16"><use href="#grid"/></svg></button></div>
        </div>
      </div>
      <div class="dfoot"><button class="ok">OK</button><button class="cancel">Cancel</button><svg class="rsz" viewBox="0 0 8 8"><path fill="#ccc" d="M6 0h2v2H6zM3 3h2v2H3zM6 3h2v2H6zM0 6h2v2H0zM3 6h2v2H3zM6 6h2v2H6z"/></svg></div>
    </section>
  </section>

  <aside class="dock">
    <div class="dockhead"><svg class="idbl"><use href="#dbl"/></svg><svg class="idbl flip"><use href="#dbl"/></svg></div>
    <div class="dockbody">
      <div class="iconcol"><div class="icell"><div class="grip"></div><svg class="i18"><use href="#info"/></svg></div></div>
      <div class="panels">
        <section class="panel">
          <div class="tabbar"><h3>Character</h3><span class="burger"></span></div>
          <div class="char">
            <div class="cr"><span class="sel btn w120"><select aria-label="Font"><option>Arial</option></select></span><span class="sel btn w75 push"><select aria-label="Font style"><option>Regular</option></select></span></div>
            <div class="cr tight"><svg class="ic"><use href="#size"/></svg><span class="sel btn w75"><select aria-label="Size"><option>2.88 pt</option></select></span><span class="ic lead push"><svg><use href="#varr"/></svg><span><u>A</u><br>A</span></span><span class="sel btn w72"><select aria-label="Leading"><option>23.06 pt</option></select></span></div>
            <div class="cr tight"><span class="ic kern">V/A<svg><use href="#larr"/></svg></span><span class="sel btn w75"><select aria-label="Kerning"><option>Metrics</option></select></span><span class="ic track push"><b>VA</b><svg><use href="#harr"/></svg></span><span class="sel btn w72"><select aria-label="Tracking"><option>0</option></select></span></div>
            <div class="cr tight"><svg class="ic"><use href="#vs"/></svg><input class="fld" value="100%" aria-label="Vertical scale"><svg class="ic push"><use href="#hs"/></svg><input class="fld" value="100%" aria-label="Horizontal scale"></div>
            <div class="cr tight"><span class="ic base"><u>A</u><sup>a</sup></span><input class="fld" value="0 pt" aria-label="Baseline shift"><span class="push clab">Color:</span><span class="color"></span></div>
            <div class="tb"><button class="on"><b>T</b></button><button><i>T</i></button><button>TT</button><button>T<small>T</small></button><button>T<sup>1</sup></button><button>T<sub>1</sub></button><button><u>T</u></button><button><s>T</s></button></div>
            <div class="tb lig"><button class="on">fi</button><button><i>&#963;</i></button><button>st</button><button class="off"><i>A</i></button><button class="over">ad</button><button class="off"><i>&#120139;</i></button><button class="off">1<sup>st</sup></button><button>½</button></div>
            <div class="cr lang"><span class="sel rnd w115"><select aria-label="Language"><option>English: USA</option></select></span><span class="aa"><sup>a</sup>a</span><span class="sel rnd w67"><select aria-label="Anti-aliasing"><option>Strong</option></select></span></div>
          </div>
        </section>
        <section class="panel layers">
          <div class="tabbar"><h3>Layers</h3><span class="burger"></span></div>
          <div class="lr l1"><span class="sel rnd w87 kind"><svg class="i10"><use href="#srch"/></svg><select aria-label="Filter kind"><option>Kind</option></select></span><svg class="i12"><use href="#pic"/></svg><svg class="i12"><use href="#adj"/></svg><svg class="i12"><use href="#type"/></svg><svg class="i12"><use href="#shape"/></svg><svg class="i12"><use href="#smart"/></svg><span class="toggle"></span></div>
          <div class="lr"><span class="sel rnd w129"><select aria-label="Blend mode"><option>Normal</option></select></span><span class="rl">Opacity:</span><span class="sel btn w51"><select aria-label="Opacity"><option>100%</option></select></span></div>
          <div class="lr nb"><span class="ll">Lock:</span><svg class="i12"><use href="#checker"/></svg><svg class="i12"><use href="#brush"/></svg><svg class="i12"><use href="#move"/></svg><svg class="i14"><use href="#artb"/></svg><svg class="i12"><use href="#lock"/></svg><span class="rl">Fill:</span><span class="sel btn w51"><select aria-label="Fill"><option>100%</option></select></span></div>
          <div class="list"><div class="layer"><span class="vis"><svg class="i14"><use href="#eye"/></svg></span><span class="thumb"></span><em>Background</em><svg class="i14"><use href="#locko"/></svg></div></div>
          <div class="lfoot"><svg class="i14 dk"><use href="#link"/></svg><span class="fx">fx</span><svg class="i14"><use href="#lmask"/></svg><svg class="i12"><use href="#adj"/></svg><svg class="i14"><use href="#folder"/></svg><svg class="i12"><use href="#plus"/></svg><svg class="i12 dk"><use href="#trash"/></svg></div>
        </section>
      </div>
    </div>
  </aside>
</main>

<footer class="taskbar">
  <div class="apps">
    <button aria-label="Start"><svg viewBox="0 0 24 24"><path fill="url(#win)" d="M.5 1h11v11H.5zM12.500 1h11v11h-11zM.5 13h11v11H.5zM12.500 13h11v11h-11z"/></svg></button>
    <button aria-label="Widgets"><svg viewBox="0 0 24 24"><path fill="#1766b5" d="M0 1h24v22H0z"/><path fill="#f4f6f8" d="M2 3h9v18H2z"/><path fill="#6cd3ff" d="M13 3h9v10h-9z"/><path fill="#1c9bf0" d="M13 14h9v7h-9z"/></svg></button>
    <button aria-label="Store"><svg viewBox="0 0 24 24"><path fill="none" stroke="#3ea6ea" stroke-width="2" d="M7 6V2h10v4"/><path fill="#f3f3f3" d="M.5 6h23v14a3 3 0 0 1-3 3h-17a3 3 0 0 1-3-3z"/><path fill="#f25022" d="M7.500 9.500h4v4h-4z"/><path fill="#7fba00" d="M12.500 9.500h4v4h-4z"/><path fill="#00a4ef" d="M7.500 14.500h4v4h-4z"/><path fill="#ffb900" d="M12.500 14.500h4v4h-4z"/></svg></button>
    <button class="run" aria-label="Explorer"><svg viewBox="0 0 24 24"><path fill="#d9951a" d="M0 2h9l2 3h-11z"/><path fill="url(#fold)" d="M0 6h9l2-2.500h13V22H0z"/><path fill="#1977c9" d="M4 22v-4c0-2 1-3 3-3h10c2 0 3 1 3 3v4z"/></svg></button>
    <button class="run act" aria-label="Photoshop"><span class="app ps">Ps</span></button>
    <button aria-label="Bridge"><span class="app br">Br</span></button>
    <button class="run" aria-label="Firefox"><svg viewBox="0 0 24 24"><path fill="url(#fire)" d="M14 0c1 3 4 3 6 6l1-1c4 8 1 18-9 18.500C4 24 0 17 1 11l2-5 2 2 3-4 1 3c2 0 3-5 5-7z"/><circle cx="12" cy="13" r="5" fill="#7a3fd0"/><path fill="#ff8a2a" d="M5 8c4-1 6 1 8 2-3 0-3 3-5 3s-3-3-3-5z"/></svg></button>
    <button class="run" aria-label="Creative Cloud"><svg viewBox="0 0 24 24"><rect x="1" y="1" width="22" height="22" rx="4" fill="url(#cc)"/><path fill="#f8c22c" opacity=".8" d="M1 14l7 9H5a4 4 0 0 1-4-4z"/><g fill="none" stroke="#fff" stroke-width="1.700"><path d="M17 17.500H8.500a4.500 4.500 0 1 1 3-7.800l5 4.500"/><path d="M8 13.500a1.500 1.500 0 1 1 1-2.500l6 6M8 8.500c3-4.500 12-2 12 4 0 3-2 5-5 5-2 0-3-1-5-3M12 8c4-2 6 2 5 5"/></g></svg></button>
  </div>
  <div class="tray"><svg class="i14 up"><use href="#chev"/></svg><svg class="i18"><use href="#cloud"/></svg><span class="lng">ENG<br>IN</span><svg class="i16"><use href="#mon"/></svg><svg class="i16"><use href="#spk"/></svg><time>04:48 PM<br>08-10-2021</time><svg class="i14"><use href="#moon"/></svg></div>
</footer>
</body>
</html>
```
FILE: styles.css
```css
* { box-sizing: border-box; }
html, body { margin: 0; }
body {
  display: flex; flex-direction: column; height: 100vh; overflow: hidden;
  background: #0f0f0f; color: #d8d8d8;
  font: 10px/14px "Open Sans", "Noto Sans", sans-serif;
}
button, select, input { font: inherit; color: inherit; }
button { background: none; border: 0; padding: 0; display: inline-flex; align-items: center; justify-content: center; }
h2, h3, h4 { margin: 0; font-size: inherit; }
svg { display: block; flex: none; }
.defs { position: absolute; width: 0; height: 0; }
.i8 { width: 8px; height: 8px; }
.i10 { width: 10px; height: 10px; }
.i12 { width: 12px; height: 12px; }
.i14 { width: 14px; height: 14px; }
.i16 { width: 16px; height: 16px; }
.i18 { width: 18px; height: 16px; }
.idbl { width: 8px; height: 6px; color: #ccc; }
.flip, .up { transform: rotate(180deg); }
.rt { transform: rotate(-90deg); }
.lf { transform: rotate(90deg); }
.dim { color: #8a8a8a; }
.dk { color: #777; }
.lt { color: #bbb; }
.push { margin-left: auto; }

/* menu bar and options bar */
.menubar { display: flex; align-items: center; height: 25px; padding-left: 5px; background: #323232; border-bottom: 1px solid #222; font-size: 12px; gap: 10px; }
.pslogo { width: 16px; height: 15px; border-radius: 3px; background: #001e36; color: #31a8ff; font-size: 9px; font-weight: 600; text-align: center; margin-right: 4px; }
.winbtns { margin-left: auto; display: flex; align-self: flex-start; height: 19px; margin-right: 3px; border: 1px solid #232323; border-top: 0; border-radius: 0 0 4px 4px; color: #888; }
.winbtns button { width: 27px; border-right: 1px solid #232323; }
.winbtns .wclose { width: 47px; border: 0; }
.options { display: flex; align-items: center; height: 34px; background: #323232; border-bottom: 1px solid #1c1c1c; padding-left: 1px; }
.options > div { display: flex; align-items: center; height: 22px; }
.grp { border-right: 1px solid #242424; }
.g-home { width: 53px; justify-content: center; }
.g-move { width: 49px; padding-left: 8px; gap: 9px; }
.g-auto { width: 154px; padding-left: 7px; justify-content: space-between; padding-right: 8px; }
.g-auto .sel { width: 55px; }
.g-show { width: 152px; padding-left: 8px; }
.g-al { width: 129px; padding-left: 13px; gap: 10px; }
.g-al :last-child { margin-left: 9px; }
.g-dots { width: 43px; justify-content: center; }
.g-3d { padding-left: 10px; gap: 9px; color: #777; }
.g-3d span { margin-right: 4px; }
.g-right { margin-left: auto; padding-right: 10px; gap: 13px; }
.g-right .wk { gap: 9px; }
label { display: flex; align-items: center; }
input[type=checkbox] { appearance: none; width: 10px; height: 10px; margin: 0 5px 0 0; border: 1px solid #777; border-radius: 2px; }

/* drop-downs */
.sel { display: grid; grid-template-columns: 1fr 14px; align-items: center; height: 17px; background: #282828; border: 1px solid #444; border-radius: 2px; }
.sel select { appearance: none; grid-area: 1 / 1 / 2 / 3; width: 100%; height: 100%; background: none; border: 0; padding: 0 0 0 4px; }
.sel::after { content: ""; grid-area: 1 / 2; justify-self: center; width: 5px; height: 5px; margin-top: -3px; border: solid #999; border-width: 0 1px 1px 0; rotate: 45deg; pointer-events: none; }
.sel.rnd { height: 20px; border-radius: 3px; }
.sel.rnd select { padding-left: 7px; }
.sel.btn { background: linear-gradient(#444, #444) calc(100% - 14px) 0 / 1px 100% no-repeat #282828; }
.w120 { width: 120px; }
.w115 { width: 115px; }
.w129 { width: 129px; }
.w87 { width: 87px; }
.w75 { width: 75px; }
.w72 { width: 72px; }
.w67 { width: 67px; }
.w51 { width: 51px; }

/* tools */
.workspace { flex: 1; display: flex; min-height: 0; }
.tools { width: 73px; background: #323232; border-right: 1px solid #222; }
.collapse { height: 12px; padding: 3px 6px; background: #272727; border-bottom: 1px solid #222; }
.grip { width: 20px; height: 4px; margin: 3px auto 0; background: repeating-linear-gradient(90deg, #222 0 1px, transparent 1px 2px); }
.tools .grip { margin-bottom: 9px; }
.toolgrid { display: grid; grid-template-columns: 33px 33px; grid-auto-rows: 26px; padding-left: 3px; color: #ccc; }
.toolgrid button { border-radius: 2px; background-repeat: no-repeat; }
.toolgrid .on { background-color: #1b1b1b; }
.toolgrid .fly { background-image: linear-gradient(135deg, transparent 50%, #ccc 50%); background-size: 3px 3px; background-position: 28px 20px; }
.swatches { position: relative; height: 55px; }
.swatches > * { position: absolute; }
.fg, .bg { width: 25px; height: 25px; border: 1px solid #111; }
.fg { left: 17px; top: 8px; background: #000; box-shadow: inset 0 0 0 1px #eee; }
.bg { left: 32px; top: 24px; background: #ffffdc; box-shadow: inset 0 0 0 1px #fff; }
.swap { left: 49px; top: 7px; color: #ccc; }
.def { left: 17px; top: 40px; }

/* document window */
.stage { flex: 1; position: relative; background: #0f0f0f; }
.docwin { position: absolute; inset: 8px 326px 6px 6px; display: flex; flex-direction: column; background: #323232; border-radius: 4px 4px 0 0; padding: 0 2px 3px 4px; border: 1px solid #2a2a2a; }
.doctitle { display: flex; align-items: center; height: 23px; gap: 6px; }
.doctitle h2 { font-size: 11px; }
.docicon { display: grid; margin-left: 2px; }
.docicon svg { width: 12px; height: 15px; grid-area: 1 / 1; }
.docicon b { grid-area: 1 / 1; place-self: center; font-size: 7px; color: #4ab1ff; }
.docbtns { margin-left: auto; display: flex; gap: 16px; padding: 3px 20px 0 0; color: #999; align-self: flex-start; }
.docbtns :last-child { margin-left: 9px; }
.docbody { flex: 1; display: grid; grid-template: 18px 1fr / 17px 1fr 18px; min-height: 0; background: #282828; }
.corner { border: dotted #555; border-width: 0 1px 1px 0; margin: 0 3px 3px 0; }
.hruler, .vruler { display: grid; color: #999; font-size: 12px; line-height: 18px; }
.hruler { grid-template-columns: repeat(16, 1fr); }
.hruler span { padding-left: 1px; border-left: 1px solid #888; background: linear-gradient(90deg, #777 1px, transparent 1px) 0 100% / 12.5% 4px repeat-x; }
.vruler { grid-template-rows: repeat(12, 1fr); line-height: 13px; }
.vruler span { padding-left: 2px; border-top: 1px solid #777; background: linear-gradient(#777 1px, transparent 1px) 100% 0 / 4px 12.5% repeat-y; }
.vscroll { grid-area: 1 / 3 / 3 / 4; display: flex; flex-direction: column; align-items: center; justify-content: space-between; padding: 7px 0; color: #888; }
.canvas { background: #ffffdc; }
.status { display: flex; align-items: center; height: 17px; background: #282828; border-top: 1px solid #222; font-size: 9px; }
.zoomv { width: 48px; padding-left: 6px; color: #eee; font-size: 10px; }
.dims { width: 168px; padding-left: 37px; align-self: stretch; background: #323232; line-height: 16px; color: #aaa; }
.status > .rt { width: 16px; height: 16px; padding: 4px; background: #323232; }
.hscroll { flex: 1; display: flex; align-items: center; padding: 0 26px 0 6px; color: #888; }
.htrack { flex: 1; }
.hthumb { width: 35.5%; height: 12px; margin-left: 32.5%; background: #444; }

/* camera raw dialog */
.dialog { position: absolute; inset: 86px 19px 62px 497px; display: flex; flex-direction: column; background: #323232; border-radius: 8px; overflow: hidden; border: 1px solid #444; border-top-width: 0; box-shadow: 0 12px 32px 2px rgba(0, 0, 0, .5); }
.dtitle { height: 30px; padding: 0 7px; background: #fff; color: #111; font-size: 11px; line-height: 30px; }
.dhead { display: flex; align-items: center; height: 40px; border-bottom: 1px solid #262626; color: #bbb; }
.dhead h3 { flex: 1; padding-left: 105px; margin-right: 234px; text-align: center; font-size: 11px; font-weight: 400; color: #ddd; }
.dhead h3 { padding-left: 0; }
.dgear { width: 33px; margin-right: 5px; }
.dexp { width: 40px; height: 27px; border-left: 1px solid #262626; }
.dmain { flex: 1; display: flex; min-height: 0; }
.preview { flex: 1; display: flex; flex-direction: column; border-right: 2px solid #282828; }
.pview { flex: 1; display: flex; background: #1b1b1b; padding: 55px 8px 57px 7px; }
.photo { flex: 1; background: #fff; }
.pfoot { display: flex; height: 38px; border-top: 1px solid #262626; font-size: 13px; }
.pfoot button { background: #2a2a2a; }
.fit { width: 84px; border-bottom: 2px solid #eee; }
.pct { width: 72px; gap: 16px; }
.pright { margin-left: auto; display: flex; align-items: center; gap: 23px; padding-right: 22px; }
.edit { width: 270px; display: flex; flex-direction: column; border-right: 1px solid #262626; }
.histo { height: 140px; border-bottom: 2px solid #262626; }
.clips { display: flex; justify-content: space-between; height: 16px; }
.cl { width: 18px; height: 16px; display: flex; justify-content: center; align-items: center; color: #fff; border: solid #666; border-width: 0 0 1px 1px; }
.cl svg { width: 13px; height: 11px; }
.blk { color: #000; border-width: 0 1px 1px 0; }
.rgb { display: flex; gap: 13px; height: 20px; margin-top: 13px; padding: 0 8px 0 16px; line-height: 20px; border-radius: 10px; background: #282828; border-right: 1px solid #777; }
.rgb b { font-weight: 400; color: #fff; }
.hline { width: 100%; height: 91px; overflow: visible; }
.scrollwrap { flex: 1; display: flex; min-height: 0; overflow: hidden; }
.rows { flex: 1; overflow: hidden; }
.row { display: flex; align-items: center; height: 40px; border-bottom: 2px solid #282828; }
.rows h4 { font-size: 12px; font-weight: 600; }
.redit { padding: 0 19px; gap: 5px; }
.redit h4 { margin-right: auto; }
.redit button { width: 32px; height: 22px; border: 1px solid #4a4a4a; border-radius: 2px; background: #282828; }
.redit .off { background: none; color: #777; }
.rprof { padding: 0 19px; }
.rprof .sel { flex: 1; height: 20px; margin: 0 18px 0 16px; }
.rsec { display: flex; align-items: center; height: 39px; padding: 0 11px 0 20px; gap: 11px; }
.rsec .dk { margin-left: auto; color: #666; }
.rsec .i10 { color: #ddd; }
.adjust { display: flex; align-items: center; height: 32px; padding: 0 12px 4px 13px; gap: 10px; }
.adjust span { margin-right: 3px; }
.adjust .tg { margin-left: auto; color: #ccc; }
.c-w { color: #bbb; }
.c-r { color: #b5262b; }
.c-g { color: #3f9b3f; }
.c-b { color: #1f6fd0; }
.curve { margin: 6px 15px 0 17px; height: 222px; border: 1px solid #000; background: linear-gradient(135deg, #606060, #2b2b2b); }
.curve svg { width: 100%; height: 100%; }
.splits { margin: 5px 15px 13px 17px; height: 12px; display: flex; justify-content: space-evenly; align-items: center; background: linear-gradient(90deg, #2b2b2b, #707070); }
.splits i { width: 10px; height: 10px; margin: 0 -5px; border-radius: 5px; background: #000; border: 2px solid #888; }
.slider { display: grid; grid-template: 18px 12px / 1fr 42px; align-items: center; padding: 0 19px 0 20px; }
.num { width: 42px; height: 18px; padding: 0 3px; background: #282828; border: 1px solid #484848; }
input[type=range] { appearance: none; grid-column: 1 / 3; width: 100%; height: 12px; margin: 0; background: linear-gradient(90deg, #666, #eee) 0 4px / 100% 3px no-repeat; }
input[type=range]::-webkit-slider-thumb { appearance: none; width: 10px; height: 10px; background: #ddd; clip-path: polygon(50% 0, 100% 60%, 100% 100%, 0 100%, 0 60%); margin-top: 2px; }
.sbar { width: 15px; display: flex; flex-direction: column; align-items: center; background: #141414; padding: 3px 0; gap: 3px; color: #aaa; }
.strack { flex: 1; width: 100%; }
.sthumb { height: 65%; background: #6b6b6b; }
.strip { width: 40px; display: flex; flex-direction: column; align-items: center; padding-top: 5px; gap: 6px; color: #bbb; }
.strip button { width: 27px; height: 28px; border: 1px solid transparent; border-radius: 2px; }
.strip .on { background: #222; border-color: #444; }
.strip .short { height: 18px; }
.stripend { margin-top: auto; display: flex; flex-direction: column; gap: 6px; padding-bottom: 7px; }
.stripend hr { width: 27px; margin: 0; border: 0; border-top: 1px solid #222; }
.dfoot { display: flex; align-items: center; height: 59px; border-top: 1px solid #282828; font-size: 11px; }
.ok { margin-left: auto; width: 71px; height: 25px; border: 1px solid #ddd; border-radius: 13px; }
.cancel { width: 90px; }
.rsz { width: 8px; height: 8px; align-self: flex-end; margin: 0 2px 2px 4px; }

/* dock */
.dock { width: 277px; display: flex; flex-direction: column; background: #222; border-left: 1px solid #333; }
.dockhead { display: flex; justify-content: space-between; height: 12px; padding: 3px 7px 0 24px; background: #272727; }
.dockbody { flex: 1; display: flex; gap: 2px; min-height: 0; }
.iconcol { width: 37px; background: #323232; }
.icell { height: 41px; padding-top: 1px; border-bottom: 1px solid #222; }
.icell svg { margin: 6px auto; color: #ddd; }
.panels { flex: 1; display: flex; flex-direction: column; gap: 2px; }
.panel { background: #323232; }
.tabbar { display: flex; justify-content: space-between; align-items: center; height: 28px; padding-right: 6px; background: #272727; }
.tabbar h3 { height: 28px; padding: 0 9px; background: #323232; line-height: 26px; font-size: 10px; font-weight: 600; color: #eee; }
.burger { width: 10px; height: 8px; background: repeating-linear-gradient(#999 0 1px, transparent 1px 2px); }
.char { padding: 14px 25px 2px 5px; }
.cr { display: flex; align-items: center; margin-bottom: 5px; }
.tight { height: 20px; margin-bottom: 0; gap: 2px; }
.ic { width: 18px; height: 15px; }
.kern { font-size: 10px; line-height: 10px; }
.kern svg { width: 10px; height: 4px; margin-left: 8px; }
.lead { display: flex; justify-content: space-between; font-size: 9px; line-height: 8px; }
.lead svg { width: 5px; height: 12px; margin-top: 3px; }
.lead span { padding-right: 2px; }
.track { display: flex; flex-direction: column; }
.track b { background: #ddd; color: #222; line-height: 11px; text-align: center; }
.track svg { width: 18px; height: 4px; }
.base { font-size: 12px; line-height: 12px; }
.base sup, .aa sup { font-size: 9px; line-height: 0; }
.fld { width: 55px; height: 17px; padding: 0 4px; background: #282828; border: 1px solid #484848; }
.clab { color: #aaa; padding-right: 6px; }
.color { width: 55px; height: 19px; background: #000; border: 1px solid #222; }
.tb { display: flex; gap: 0; padding: 3px 0 1px 6px; font: 600 14px/20px "Liberation Serif", "DejaVu Serif", serif; }
.tb button { width: 24px; height: 23px; border-radius: 2px; white-space: nowrap; }
.tb button.on { background: #1c1c1c; }
.tb small, .tb sub, .tb sup { font-size: 9px; line-height: 0; }
.tb sup { align-self: flex-start; padding-top: 8px; }
.tb sub { align-self: flex-end; padding-bottom: 6px; }
.tb .off { color: #777; }
.tb .over { text-decoration: overline; }
.tb.lig { padding: 4px 0 3px 6px; font-weight: 400; font-size: 16px; }
.lang { margin: 2px 0 0; justify-content: space-between; }
.aa { font-size: 12px; }
.layers { flex: 1; display: flex; flex-direction: column; color: #888; }
.layers .sel { border-color: #3e3e3e; background-color: #2b2b2b; }
.layers .sel::after { border-color: #666; }
.lr { display: flex; align-items: center; height: 28px; padding: 0 5px 0 3px; border-bottom: 1px solid #282828; }
.l1 { height: 32px; padding-top: 4px; justify-content: space-between; }
.kind svg { grid-area: 1 / 1; margin-left: 8px; color: #aaa; }
.sel.kind select { padding-left: 21px; }
.toggle { width: 9px; height: 17px; border-radius: 5px; background: radial-gradient(circle at 50% 4px, #888 4px, #222 4px); }
.rl { margin-left: auto; padding-right: 4px; }
.nb { border: 0; height: 30px; gap: 10px; }
.nb .rl { margin-right: -10px; }
.ll { padding-left: 2px; }
.list { flex: 1; background: #2b2b2b; }
.layer { display: flex; align-items: center; height: 51px; margin-right: 17px; background: #4d4d4d; color: #eee; }
.vis { width: 30px; height: 51px; display: flex; align-items: center; justify-content: center; background: #323232; }
.thumb { width: 55px; height: 42px; margin: 0 10px 0 5px; background: #ffffdc; border: 1px solid #666; border-top-color: #111; }
.layer em { margin-right: auto; }
.layer > svg { margin-right: 14px; }
.lfoot { display: flex; align-items: center; height: 26px; padding: 0 28px 1px 33px; justify-content: space-between; border-top: 1px solid #222; color: #ccc; }
.fx { font: italic 14px/14px "Liberation Serif", serif; color: #777; }

/* taskbar */
.taskbar { display: grid; grid-template-columns: 1fr auto 1fr; align-items: center; height: 48px; background: linear-gradient(90deg, #1c202c 0, #1a2333 18%, #11235a 20%, #13205c 32%, #17195c 36%, #13205c 40%, #161f4a 58%, #1b1d38 62%, #1a202c 70%, #1c212d 100%); color: #fff; }
.apps { grid-column: 2; display: flex; gap: 4px; }
.apps button { width: 40px; height: 40px; flex-direction: column; border-radius: 4px; border: 1px solid transparent; }
.apps svg, .app { width: 24px; height: 24px; }
.run { background: linear-gradient(#999, #999) 50% 35px / 6px 3px no-repeat; }
.apps .run { background: linear-gradient(#999, #999) 50% 35px / 6px 3px no-repeat; }
.apps .act { background: linear-gradient(#aaa, #aaa) 50% 35px / 16px 3px no-repeat #262a5c; border-color: #34386a; }
.app { width: 21px; height: 21px; border-radius: 4px; line-height: 21px; font-size: 11px; font-weight: 600; }
.ps { background: #001e36; color: #31a8ff; }
.br { background: #000b1d; color: #fff; }
.tray { display: flex; align-items: center; justify-content: flex-end; gap: 8px; padding-right: 20px; font-size: 11px; line-height: 16px; }
.lng { width: 38px; margin-right: 3px; text-align: center; font-size: 12px; }
.tray time { text-align: right; padding-left: 9px; margin-right: 2px; }
```
